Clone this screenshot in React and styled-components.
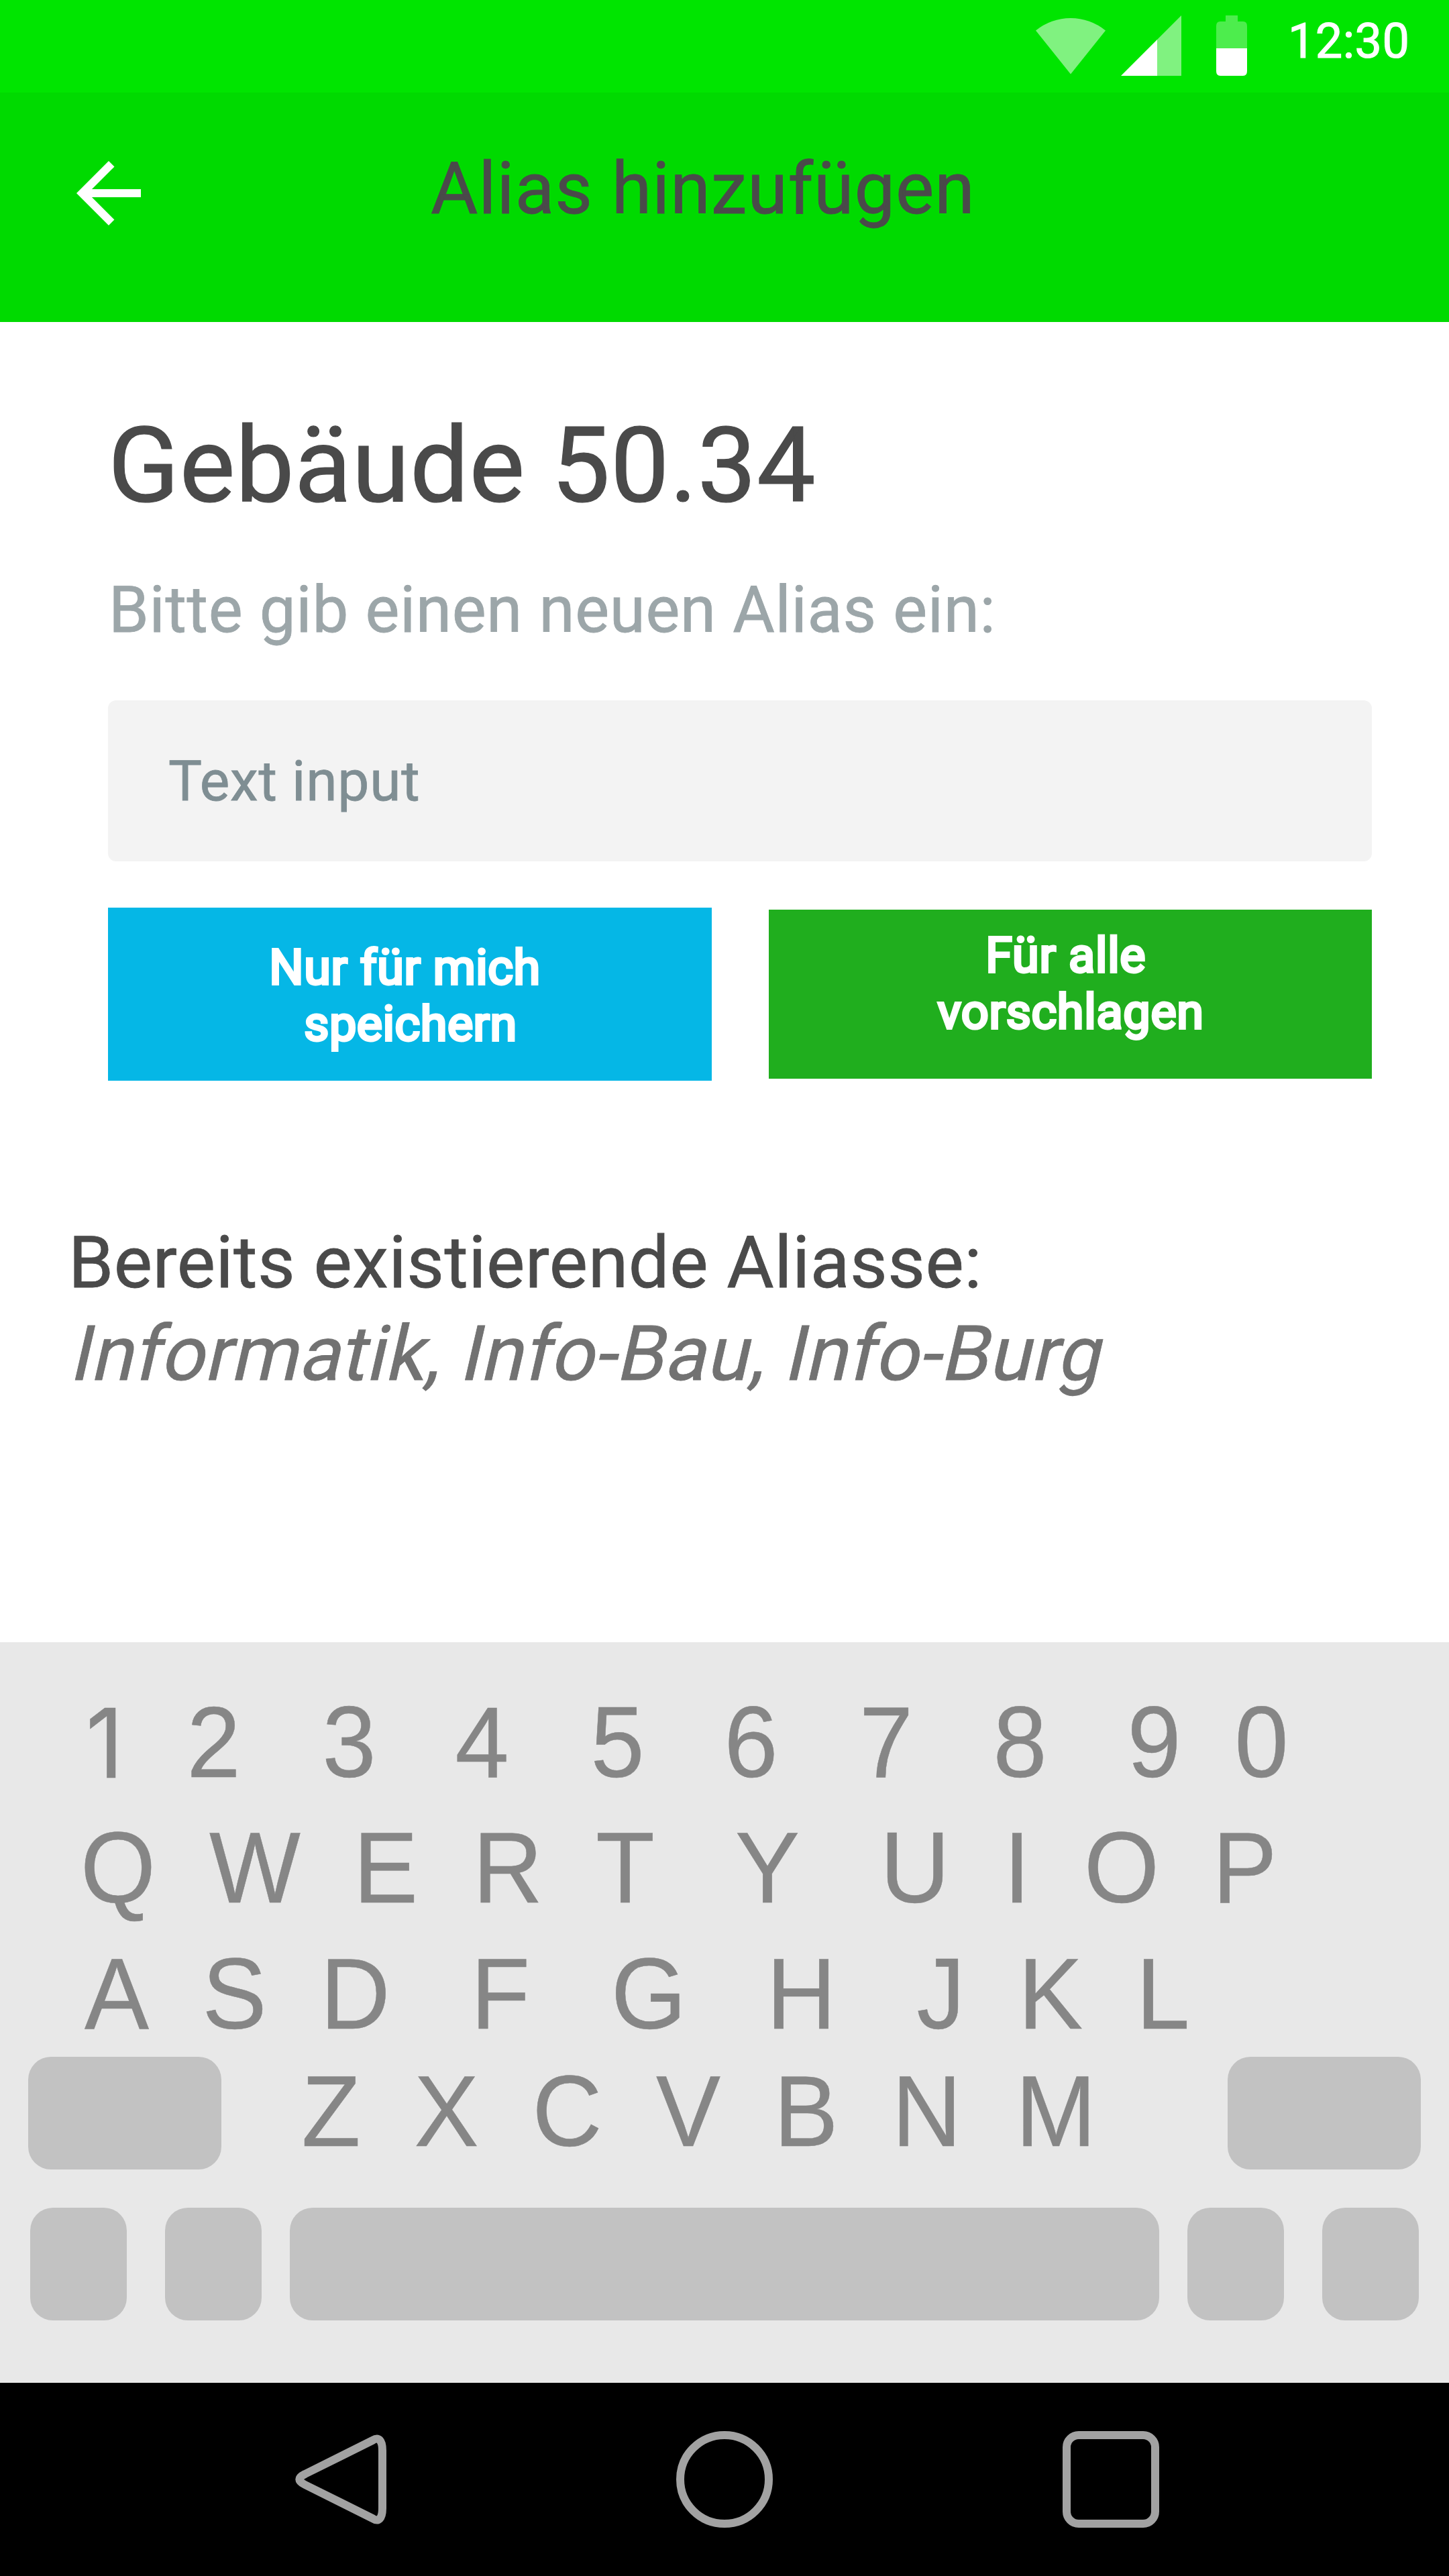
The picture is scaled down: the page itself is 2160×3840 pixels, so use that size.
import React from "react";
import styled, { createGlobalStyle } from "styled-components";

const GlobalStyle = createGlobalStyle`
  * { box-sizing: border-box; }
  body { margin: 0; background: #fff; }
`;

const Screen = styled.div`
  display: flex;
  flex-direction: column;
  width: 2160px;
  height: 3840px;
  overflow: hidden;
  background: #fff;
  font-family: Roboto, "Liberation Sans", sans-serif;
  color: #4a4a4a;
`;

/* Status bar */
const StatusBar = styled.div`
  display: flex;
  align-items: flex-start;
  flex: none;
  height: 138px;
  padding: 19px 0 0 1544px;
  background: #00e500;
`;

const StatusIcon = styled.svg`
  display: block;
  flex: none;
  margin: 4px ${(p) => p.$after}px 0 0;
`;

const Clock = styled.time`
  margin-top: 1px;
  color: #fff;
  font-size: 72px;
  line-height: 84px;
  letter-spacing: 0.4px;
  -webkit-text-stroke: 1.2px currentColor;
`;

/* App bar */
const AppBar = styled.header`
  display: flex;
  align-items: flex-start;
  flex: none;
  height: 342px;
  padding: 78px 90px 0;
  background: #00da00;
`;

const BackIcon = styled.svg`
  display: block;
  flex: none;
  width: 144px;
  height: 144px;
  fill: #fff;
`;

const AppTitle = styled.h1`
  margin: 2px 0 0 408px;
  font-size: 108px;
  line-height: 126px;
  font-weight: 400;
  letter-spacing: 0.9px;
  white-space: nowrap;
  -webkit-text-stroke: 0.8px currentColor;
`;

/* Content */
const Content = styled.main`
  flex: none;
  height: 1968px;
  padding-top: 122px;
`;

const Form = styled.section`
  display: flex;
  flex-direction: column;
  margin: 0 115px 0 161px;
`;

const Building = styled.h2`
  margin: 0;
  font-size: 156px;
  line-height: 184px;
  font-weight: 400;
  letter-spacing: 0.5px;
  -webkit-text-stroke: 1.2px currentColor;
`;

const Prompt = styled.p`
  margin: 67px 0 79px 1px;
  font-size: 96px;
  line-height: 112px;
  letter-spacing: 0.68px;
  color: #9ca6a9;
  -webkit-text-stroke: 0.8px currentColor;
`;

const Field = styled.div`
  display: flex;
  align-items: center;
  height: 240px;
  padding: 2px 90px 0;
  border-radius: 12px;
  background: #f3f3f3;
  color: #7f8e93;
  font-size: 84px;
  line-height: 98px;
  letter-spacing: 0.7px;
  -webkit-text-stroke: 0.8px currentColor;
`;

const Actions = styled.div`
  display: flex;
  justify-content: space-between;
  align-items: center;
  height: 258px;
  margin-top: 69px;
`;

const ActionButton = styled.button`
  display: flex;
  flex-direction: column;
  align-items: center;
  justify-content: flex-start;
  width: ${(p) => p.$width}px;
  height: ${(p) => p.$height}px;
  padding: ${(p) => p.$top}px 0 0;
  border: 0;
  background: ${(p) => p.$color};
  color: #fff;
  font: 400 72px/84px Roboto, "Liberation Sans", sans-serif;
  letter-spacing: ${(p) => p.$spacing}px;
  -webkit-text-stroke: 4px #fff;
`;

const ButtonLine = styled.span`
  padding: 0 ${(p) => p.$after || 0}px 0 ${(p) => p.$before || 0}px;
`;

const Existing = styled.section`
  margin: 208px 0 0 102px;
`;

const ExistingTitle = styled.h3`
  margin: 0;
  font-size: 108px;
  line-height: 126px;
  font-weight: 400;
  letter-spacing: 0.5px;
  -webkit-text-stroke: 0.8px currentColor;
`;

const AliasList = styled.p`
  width: max-content;
  margin: 6px 0 0;
  font-size: 114px;
  line-height: 134px;
  letter-spacing: 0.7px;
  color: #727272;
  -webkit-text-stroke: 0.8px currentColor;
  transform: skewX(-13deg);
  transform-origin: 0 106px;
`;

/* Keyboard */
const Keyboard = styled.section`
  flex: none;
  height: 1104px;
  padding-top: 77px;
  background: #e8e8e8;
`;

const KeyRow = styled.div`
  display: flex;
  height: 150px;
  margin-bottom: ${(p) => p.$after}px;
`;

const ControlRow = styled.div`
  display: flex;
  align-items: center;
  height: 168px;
  padding: 0 ${(p) => p.$side}px;
  margin-bottom: 57px;
`;

const Key = styled.span`
  display: flex;
  flex: none;
  justify-content: center;
  width: 100px;
  margin-left: ${(p) => p.$gap}px;
  color: #868686;
  font-family: "Liberation Sans", Arial, sans-serif;
  font-size: 144px;
  line-height: 150px;
  -webkit-text-stroke: 0.5px currentColor;
  transform: scaleY(1.04);
  transform-origin: 50% 124px;
`;

const DigitOne = styled(Key)`
  padding-left: 7px;
  font-family: Inter, "Liberation Sans", sans-serif;
  font-size: 138px;
`;

const BlankKey = styled.span`
  flex: none;
  width: ${(p) => p.$width}px;
  height: 168px;
  margin-left: ${(p) => p.$gap || 0};
  border-radius: 34px;
  background: #c2c2c2;
`;

/* System navigation */
const NavBar = styled.nav`
  display: flex;
  gap: 432px;
  flex: none;
  height: 288px;
  padding: 72px 0 0 440px;
  background: #000;
`;

const NavIcon = styled.svg`
  display: block;
  flex: none;
  height: 144px;
  fill: none;
  stroke: #a2a2a2;
  stroke-width: 12;
`;

/* Each entry: a letter and the space before its 100px cell */
const DIGITS = [["1", 102.5], ["2", 66], ["3", 102], ["4", 98], ["5", 102], ["6", 99], ["7", 101.5], ["8", 99.5], ["9", 100], ["0", 60]];
const TOP = [["Q", 126], ["W", 104], ["E", 95], ["R", 82], ["T", 75], ["Y", 112], ["U", 120], ["I", 52], ["O", 56], ["P", 83.5]];
const HOME = [["A", 124], ["S", 75.5], ["D", 80], ["F", 116.5], ["G", 121], ["H", 127.5], ["J", 108], ["K", 63.5], ["L", 67.5]];
const BOTTOM = [["Z", 113.5], ["X", 72], ["C", 80], ["V", 80.5], ["B", 75.5], ["N", 80], ["M", 92.5]];

function Keys({ items }) {
  return items.map(([label, gap]) => {
    const Cell = label === "1" ? DigitOne : Key;
    return <Cell key={label} $gap={gap}>{label}</Cell>;
  });
}

export default function App() {
  return (
    <Screen>
      <GlobalStyle />
      <StatusBar>
        <StatusIcon $after={23} width="104" height="90" viewBox="0 0 104 90">
          <path d="M0 22.5A82.3 82.3 0 0 1 104 22.5L52 87.5Z" fill="#fff" fillOpacity=".5" />
        </StatusIcon>
        <StatusIcon $after={52} width="90" height="90" viewBox="0 0 90 90">
          <path d="M54 36L90 0V90H54Z" fill="#fff" fillOpacity=".5" />
          <path d="M0 90L54 36V90Z" fill="#fff" />
        </StatusIcon>
        <StatusIcon $after={61} width="46" height="90" viewBox="0 0 46 90">
          <path d="M14 0H32V9H40Q46 9 46 16V49H0V16Q0 9 6 9H14Z" fill="#fff" fillOpacity=".3" />
          <path d="M0 49H46V83Q46 90 40 90H6Q0 90 0 83Z" fill="#fff" />
        </StatusIcon>
        <Clock>12:30</Clock>
      </StatusBar>

      <AppBar>
        <BackIcon viewBox="0 0 24 24">
          <path d="M20 11H7.83l5.59-5.59L12 4l-8 8 8 8 1.41-1.41L7.83 13H20v-2z" />
        </BackIcon>
        <AppTitle>Alias hinzufügen</AppTitle>
      </AppBar>

      <Content>
        <Form>
          <Building>Gebäude 50.34</Building>
          <Prompt>Bitte gib einen neuen Alias ein:</Prompt>
          <Field>Text input</Field>
          <Actions>
            <ActionButton $color="#05b7e6" $width={900} $height={258} $top={48} $spacing={0.5}>
              <ButtonLine $after={15}>Nur für mich</ButtonLine>
              <ButtonLine $before={2}>speichern</ButtonLine>
            </ActionButton>
            <ActionButton $color="#20ae1e" $width={899.5} $height={252} $top={27} $spacing={0.7}>
              <ButtonLine $after={13}>Für alle</ButtonLine>
              <ButtonLine $before={2}>vorschlagen</ButtonLine>
            </ActionButton>
          </Actions>
        </Form>
        <Existing>
          <ExistingTitle>Bereits existierende Aliasse:</ExistingTitle>
          <AliasList>Informatik, Info-Bau, Info-Burg</AliasList>
        </Existing>
      </Content>

      <Keyboard>
        <KeyRow $after={37}><Keys items={DIGITS} /></KeyRow>
        <KeyRow $after={38}><Keys items={TOP} /></KeyRow>
        <KeyRow $after={16}><Keys items={HOME} /></KeyRow>
        <ControlRow $side={42}>
          <BlankKey $width={288} />
          <Keys items={BOTTOM} />
          <BlankKey $width={288} $gap="auto" />
        </ControlRow>
        <ControlRow $side={45}>
          <BlankKey $width={144} />
          <BlankKey $width={144} $gap="57px" />
          <BlankKey $width={1296} $gap="42px" />
          <BlankKey $width={144} $gap="42px" />
          <BlankKey $width={144} $gap="57px" />
        </ControlRow>
      </Keyboard>

      <NavBar>
        <NavIcon width="136" viewBox="0 0 136 144">
          <path d="M14.7 64L115.7 13.7C124 8.5 130 13 130 29V115C130 131 124 135.5 115.7 130.3L14.7 80C3.5 74.5 3.5 69.5 14.7 64Z" />
        </NavIcon>
        <NavIcon width="144" viewBox="0 0 144 144">
          <circle cx="72" cy="72" r="66" />
        </NavIcon>
        <NavIcon width="144" viewBox="0 0 144 144">
          <rect x="6" y="6" width="132" height="132" rx="18" />
        </NavIcon>
      </NavBar>
    </Screen>
  );
}
